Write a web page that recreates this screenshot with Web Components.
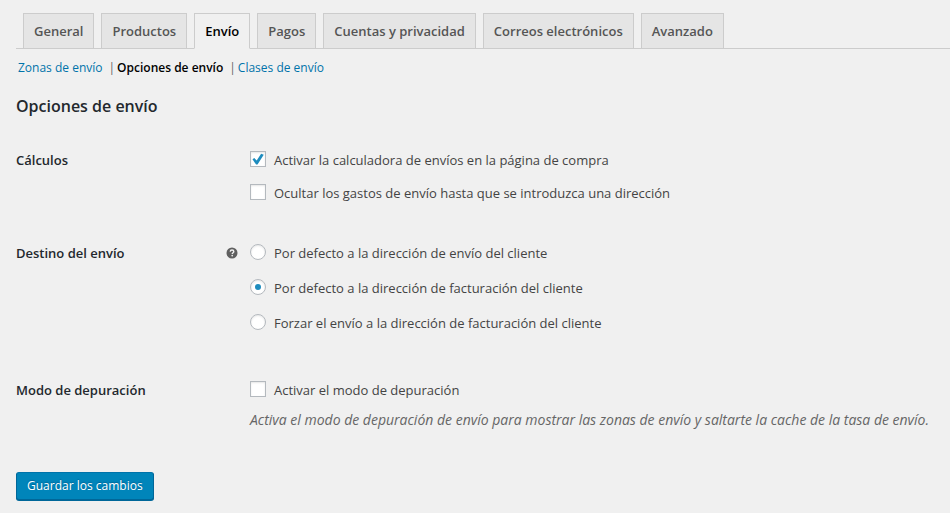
<!DOCTYPE html>
<html lang="es">
<head>
<meta charset="utf-8">
<meta name="viewport" content="width=device-width, initial-scale=1">
<title>Opciones de envío</title>
<style>
    body {
        margin: 0;
        background: #f0f0f0;
        color: #444;
        font: 13px/20px "Open Sans", "Noto Sans", sans-serif;
    }
</style>
</head>
<body>
<shipping-settings></shipping-settings>

<script>
class SettingsTabs extends HTMLElement {
    constructor() {
        super();
        this.attachShadow({ mode: "open" });
        this.shadowRoot.innerHTML = `
            <style>
                :host {
                    display: block;
                    border-bottom: 1px solid #ccc;
                }
                nav {
                    display: flex;
                    gap: 7px;
                    padding-left: 7px;
                    margin-bottom: -1px;
                }
            </style>
            <nav aria-label="Ajustes"><slot></slot></nav>
        `;
    }
}
customElements.define("settings-tabs", SettingsTabs);

class SettingsTab extends HTMLElement {
    constructor() {
        super();
        this.attachShadow({ mode: "open" });
        this.shadowRoot.innerHTML = `
            <style>
                :host {
                    display: block;
                }
                a {
                    display: block;
                    padding: 5px 10px;
                    border: 1px solid #ccc;
                    background: #e5e5e5;
                    color: #555;
                    font-weight: 600;
                    line-height: 24px;
                    text-decoration: none;
                    white-space: nowrap;
                }
                :host([current]) a {
                    border-bottom-color: #f0f0f0;
                    background: #f0f0f0;
                    color: #000;
                }
            </style>
            <a href="#"><slot></slot></a>
        `;
    }
}
customElements.define("settings-tab", SettingsTab);

class SectionLinks extends HTMLElement {
    constructor() {
        super();
        this.attachShadow({ mode: "open" });
        this.shadowRoot.innerHTML = `
            <style>
                :host {
                    display: block;
                    padding: 9px 2px 0;
                    color: #666;
                    font-size: 12px;
                }
                ul {
                    display: flex;
                    flex-wrap: wrap;
                    gap: 2px;
                    margin: 0;
                    padding: 0;
                    list-style: none;
                }
                li {
                    display: flex;
                    gap: 6px;
                }
                a {
                    color: #0073aa;
                    text-decoration: none;
                }
                a.current {
                    color: #000;
                    font-weight: 600;
                }
            </style>
            <ul>
                <li><a href="#">Zonas de envío</a> <span>|</span></li>
                <li><a href="#" class="current">Opciones de envío</a> <span>|</span></li>
                <li><a href="#">Clases de envío</a></li>
            </ul>
        `;
    }
}
customElements.define("section-links", SectionLinks);

class SettingsRow extends HTMLElement {
    constructor() {
        super();
        this.attachShadow({ mode: "open" });
        this.shadowRoot.innerHTML = `
            <style>
                :host {
                    display: block;
                }
                .row {
                    display: grid;
                    grid-template-columns: 210px 24px 1fr;
                }
                h3 {
                    margin: 0;
                    color: #23282d;
                    font-size: 13px;
                    font-weight: 600;
                }
            </style>
            <div class="row" role="group" aria-labelledby="title">
                <h3 id="title"><slot name="title"></slot></h3>
                <div><slot name="help"></slot></div>
                <div><slot></slot></div>
            </div>
        `;
    }
}
customElements.define("settings-row", SettingsRow);

class HelpTip extends HTMLElement {
    constructor() {
        super();
        this.attachShadow({ mode: "open" });
        this.shadowRoot.innerHTML = `
            <style>
                :host {
                    display: flex;
                    align-items: center;
                    height: 20px;
                }
                svg {
                    display: block;
                    width: 12px;
                    height: 12px;
                }
            </style>
            <svg viewBox="0 0 12 12" aria-hidden="true">
                <circle cx="6" cy="6" r="5.5" fill="#606060"/>
                <path d="M4.2 4.6C4.3 3.5 5 3 6 3s1.8.6 1.8 1.5C7.8 5.7 6.2 5.7 6.2 7" fill="none" stroke="#f0f0f0" stroke-width="1.4"/>
                <circle cx="6.2" cy="8.6" r=".85" fill="#f0f0f0"/>
            </svg>
        `;
    }
}
customElements.define("help-tip", HelpTip);

// Radios only exclude each other inside one root, so the list owns all its inputs.
class OptionList extends HTMLElement {
    constructor() {
        super();
        this.attachShadow({ mode: "open" });
        this.shadowRoot.innerHTML = `
            <style>
                :host {
                    display: grid;
                    gap: 13px;
                    justify-items: start;
                }
                :host([type="radio"]) {
                    gap: 15px;
                }
                label {
                    display: flex;
                    gap: 8px;
                }
                input {
                    appearance: none;
                    display: grid;
                    place-items: center;
                    flex: none;
                    box-sizing: border-box;
                    width: 16px;
                    height: 16px;
                    margin: 1px 0 0;
                    border: 1px solid #b4b9be;
                    background: #fff;
                    box-shadow: inset 0 1px 2px rgba(0, 0, 0, 0.1);
                }
                input[type="radio"] {
                    border-radius: 50%;
                }
                input[type="radio"]:checked::before {
                    content: "";
                    width: 6px;
                    height: 6px;
                    border-radius: 50%;
                    background: #1e8cbe;
                }
                input[type="checkbox"]:checked::before {
                    content: "";
                    width: 12px;
                    height: 12px;
                    background: #1e8cbe;
                    clip-path: polygon(4% 52%, 19% 42%, 39% 63%, 76% 6%, 98% 15%, 46% 96%, 34% 96%);
                }
            </style>
        `;
    }

    connectedCallback() {
        const type = this.getAttribute("type");

        [...this.children].forEach((item, index) => {
            item.slot = `option-${index}`;

            const label = document.createElement("label");
            const input = document.createElement("input");
            const slot = document.createElement("slot");
            input.type = type;
            if (type === "radio") input.name = "option";
            input.checked = item.hasAttribute("data-checked");
            slot.name = item.slot;

            label.append(input, slot);
            this.shadowRoot.appendChild(label);
        });
    }
}
customElements.define("option-list", OptionList);

class SaveButton extends HTMLElement {
    constructor() {
        super();
        this.attachShadow({ mode: "open" });
        this.shadowRoot.innerHTML = `
            <style>
                :host {
                    display: block;
                }
                button {
                    padding: 0 10px;
                    border: 1px solid;
                    border-color: #0073aa #006799 #006799;
                    border-radius: 3px;
                    background: #0085ba;
                    box-shadow: 0 1px 0 #006799;
                    color: #fff;
                    font: inherit;
                    font-size: 12px;
                    line-height: 26px;
                    text-shadow: 0 -1px 1px #006799;
                    cursor: pointer;
                }
            </style>
            <button type="button"><slot></slot></button>
        `;
    }
}
customElements.define("save-button", SaveButton);

class ShippingSettings extends HTMLElement {
    constructor() {
        super();
        this.attachShadow({ mode: "open" });
        this.shadowRoot.innerHTML = `
            <style>
                :host {
                    display: block;
                    padding: 13px 0 10px 16px;
                }
                h2 {
                    margin: 16px 0 32px;
                    color: #23282d;
                    font-size: 16px;
                    font-weight: 600;
                    line-height: 24px;
                }
                .rows {
                    display: grid;
                    gap: 40px;
                    margin-bottom: 42px;
                }
                .choices {
                    padding-bottom: 7px;
                }
                p {
                    margin: 10px 0 0;
                    color: #666;
                    font-size: 14px;
                    font-style: italic;
                }
            </style>
            <settings-tabs>
                <settings-tab>General</settings-tab>
                <settings-tab>Productos</settings-tab>
                <settings-tab current>Envío</settings-tab>
                <settings-tab>Pagos</settings-tab>
                <settings-tab>Cuentas y privacidad</settings-tab>
                <settings-tab>Correos electrónicos</settings-tab>
                <settings-tab>Avanzado</settings-tab>
            </settings-tabs>
            <section-links></section-links>
            <h2>Opciones de envío</h2>
            <div class="rows">
                <settings-row>
                    <span slot="title">Cálculos</span>
                    <option-list type="checkbox">
                        <span data-checked>Activar la calculadora de envíos en la página de compra</span>
                        <span>Ocultar los gastos de envío hasta que se introduzca una dirección</span>
                    </option-list>
                </settings-row>
                <settings-row>
                    <span slot="title">Destino del envío</span>
                    <help-tip slot="help"></help-tip>
                    <option-list type="radio" class="choices">
                        <span>Por defecto a la dirección de envío del cliente</span>
                        <span data-checked>Por defecto a la dirección de facturación del cliente</span>
                        <span>Forzar el envío a la dirección de facturación del cliente</span>
                    </option-list>
                </settings-row>
                <settings-row>
                    <span slot="title">Modo de depuración</span>
                    <option-list type="checkbox">
                        <span>Activar el modo de depuración</span>
                    </option-list>
                    <p>Activa el modo de depuración de envío para mostrar las zonas de envío y saltarte la cache de la tasa de envío.</p>
                </settings-row>
            </div>
            <save-button>Guardar los cambios</save-button>
        `;
    }
}
customElements.define("shipping-settings", ShippingSettings);
</script>
</body>
</html>
